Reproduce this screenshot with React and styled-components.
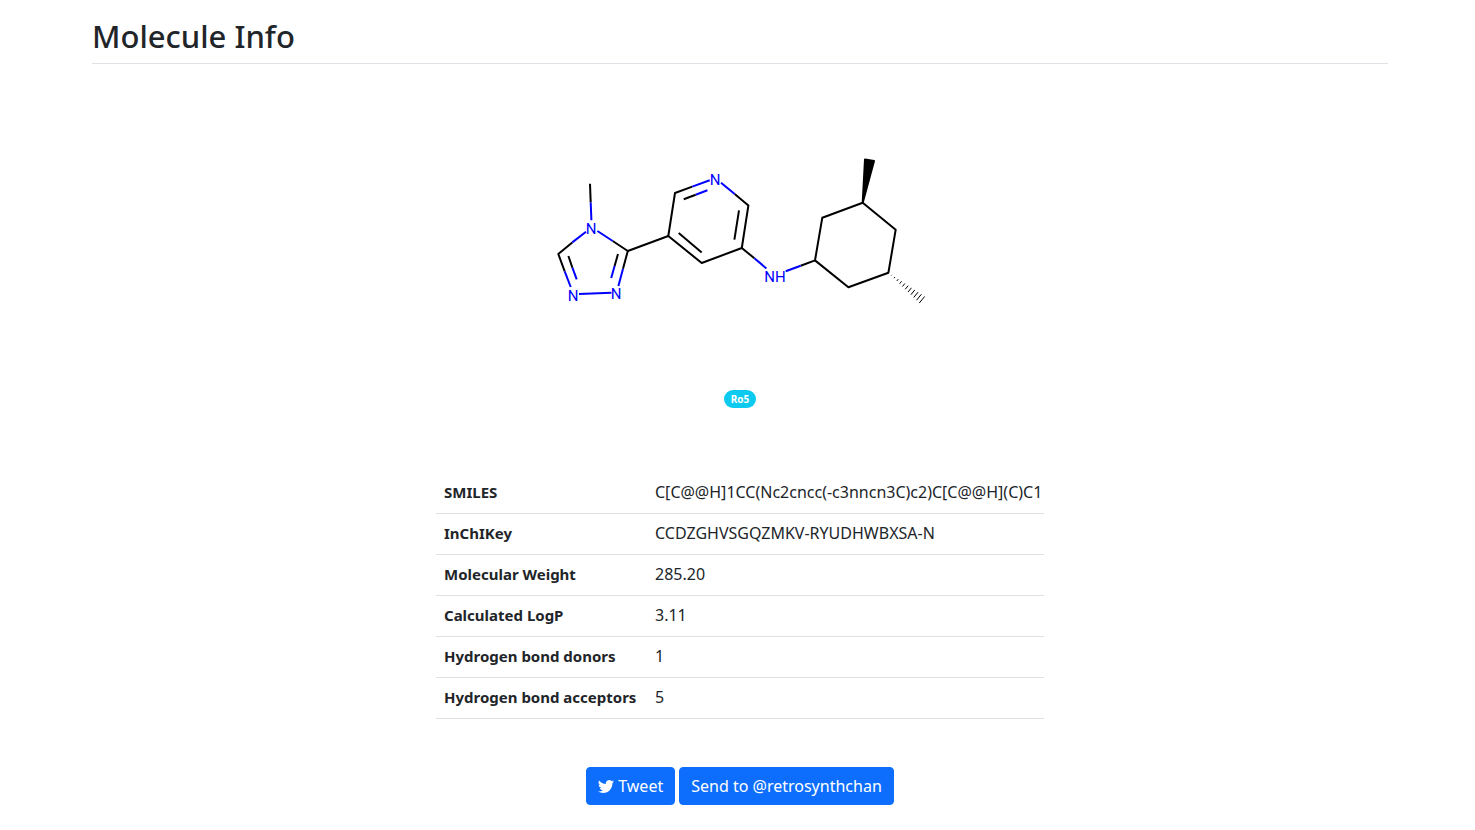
import React from 'react';
import styled, { createGlobalStyle } from 'styled-components';

const GlobalStyle = createGlobalStyle`
  *, *::before, *::after { box-sizing: border-box; }
  body {
    margin: 0;
    background: #fff;
    color: #212529;
    font-family: "Noto Sans", "Open Sans", sans-serif;
    font-size: 16px;
    line-height: 24px;
  }
`;

const Page = styled.div`
  padding-left: 5px;
`;

const Container = styled.main`
  max-width: 1320px;
  margin: 0 auto;
  padding: 17px 12px 24px;
  display: flex;
  flex-direction: column;
  align-items: center;
`;

const Title = styled.h1`
  align-self: stretch;
  margin: 0 0 17px;
  padding-bottom: 8px;
  border-bottom: 1px solid #dee2e6;
  font-size: 31px;
  font-weight: 500;
  line-height: 38px;
`;

const Drawing = styled.svg`
  display: block;
  width: 400px;
  max-width: 100%;
  height: auto;
`;

const Bond = styled.path`
  fill: none;
  stroke: ${(p) => (p.$nitrogen ? '#00f' : '#000')};
  stroke-width: ${(p) => (p.$thin ? 1 : 2)}px;
  stroke-linejoin: round;
`;

const Atom = styled.text`
  fill: #00f;
  font-family: Roboto, sans-serif;
  font-size: 15px;
  text-anchor: middle;
`;

const Badge = styled.span`
  margin: 9px 0 65px;
  padding: 0 7px;
  border-radius: 9px;
  background: #0dcaf0;
  color: #fff;
  font-family: "Open Sans", sans-serif;
  font-size: 10px;
  font-weight: 700;
  line-height: 18px;
`;

const Properties = styled.table`
  border-collapse: collapse;
  margin-bottom: 48px;
`;

const Row = styled.tr`
  border-bottom: 1px solid #dee2e6;
`;

const Name = styled.th`
  min-width: 211px;
  padding: 7px 8px 9px;
  text-align: left;
  font-size: 15px;
  font-weight: 700;
`;

const Value = styled.td`
  min-width: 397px;
  padding: 7px 0 9px 8px;
`;

const Actions = styled.div`
  display: flex;
  flex-wrap: wrap;
  justify-content: center;
  gap: 4px;
`;

const Button = styled.button`
  display: inline-flex;
  align-items: center;
  gap: 4px;
  padding: 6px 11px;
  border: 1px solid #0d6efd;
  border-radius: 4px;
  background: #0d6efd;
  color: #fff;
  font: inherit;
  cursor: pointer;
`;

const nitrogenBonds = [
  'M50.7 121.5L51.4 139.3',
  'M46 150.7L32.3 161.4',
  'M24.7 190.4L30.7 206',
  'M32.4 186.7L36.7 198.4',
  'M39 213L71.4 211.7',
  'M78.4 205L83 187.7',
  'M71.2 197L74.6 185',
  'M72.7 160L57.4 150',
  'M152.3 105.6L169.7 99.3',
  'M155.7 113.7L167.4 109.3',
  'M181 101.7L194.7 113',
  'M214.4 177.3L226.4 187.4',
  'M245.7 190.3L260.7 184.7',
];

const carbonBonds = [
  'M50 102.8L50.7 121.5',
  'M32.3 161.4L18.3 173L24.7 190.4',
  'M28.4 175L32.4 186.7',
  'M83 187.7L87.8 170L72.7 160',
  'M74.6 185L78 173',
  'M87.8 170L128.3 155',
  'M152.3 105.6L135 112L128.3 155L161.7 182L201.8 167L208.4 124.4L194.7 113',
  'M143.7 118.3L155.7 113.7',
  'M199 129.4L194.4 158.7',
  'M138.7 152L161.7 171.4',
  'M201.8 167L214.4 177.3',
  'M260.7 184.7L275 179.4',
  'M275 179.4L282.3 136.7L322.7 121.7L355.7 148.7L348.4 191.7L308.4 206.3Z',
];

const atoms = [
  ['N', 51, 153],
  ['N', 33, 220],
  ['N', 76, 218],
  ['N', 175, 104],
  ['NH', 235, 201],
];

// Eleven short strokes across the bond, widening away from the ring.
const hashBond = Array.from({ length: 11 }, (_, i) => {
  const t = (i + 1) / 11;
  const x = 348.4 + 33.6 * t;
  const y = 191.7 + 27 * t;
  const w = 4.2 * t;
  return `M${x - 0.63 * w} ${y + 0.78 * w}L${x + 0.63 * w} ${y - 0.78 * w}`;
}).join('');

const properties = [
  ['SMILES', 'C[C@@H]1CC(Nc2cncc(-c3nncn3C)c2)C[C@@H](C)C1'],
  ['InChIKey', 'CCDZGHVSGQZMKV-RYUDHWBXSA-N'],
  ['Molecular Weight', '285.20'],
  ['Calculated LogP', '3.11'],
  ['Hydrogen bond donors', '1'],
  ['Hydrogen bond acceptors', '5'],
];

function Molecule() {
  return (
    <Drawing viewBox="0 0 400 300" role="img" aria-label="Molecule structure">
      {carbonBonds.map((d) => <Bond key={d} d={d} />)}
      {nitrogenBonds.map((d) => <Bond key={d} d={d} $nitrogen />)}
      <path d="M322.7 121.7L325 78.5L334 80Z" fill="#000" stroke="#000" strokeWidth="2" strokeLinejoin="round" />
      <Bond d={hashBond} $thin />
      {atoms.map(([label, x, y]) => <Atom key={`${x}-${y}`} x={x} y={y}>{label}</Atom>)}
    </Drawing>
  );
}

function TwitterIcon() {
  return (
    <svg width="16" height="16" viewBox="0 0 16 16" fill="currentColor" aria-hidden="true">
      <path d="M5.026 15c6.038 0 9.341-5.003 9.341-9.334 0-.14 0-.282-.006-.422A6.685 6.685 0 0 0 16 3.542a6.658 6.658 0 0 1-1.889.518 3.301 3.301 0 0 0 1.447-1.817 6.533 6.533 0 0 1-2.087.793A3.286 3.286 0 0 0 7.875 6.03a9.325 9.325 0 0 1-6.767-3.429 3.289 3.289 0 0 0 1.018 4.382A3.323 3.323 0 0 1 .64 6.575v.045a3.288 3.288 0 0 0 2.632 3.218 3.203 3.203 0 0 1-.865.115 3.23 3.23 0 0 1-.614-.057 3.283 3.283 0 0 0 3.067 2.277A6.588 6.588 0 0 1 .78 13.58a6.32 6.32 0 0 1-.78-.045A9.344 9.344 0 0 0 5.026 15z" />
    </svg>
  );
}

export default function App() {
  return (
    <Page>
      <GlobalStyle />
      <Container>
        <Title>Molecule Info</Title>
        <Molecule />
        <Badge>Ro5</Badge>
        <Properties>
          <tbody>
            {properties.map(([name, value]) => (
              <Row key={name}>
                <Name scope="row">{name}</Name>
                <Value>{value}</Value>
              </Row>
            ))}
          </tbody>
        </Properties>
        <Actions>
          <Button type="button"><TwitterIcon />Tweet</Button>
          <Button type="button">Send to @retrosynthchan</Button>
        </Actions>
      </Container>
    </Page>
  );
}
